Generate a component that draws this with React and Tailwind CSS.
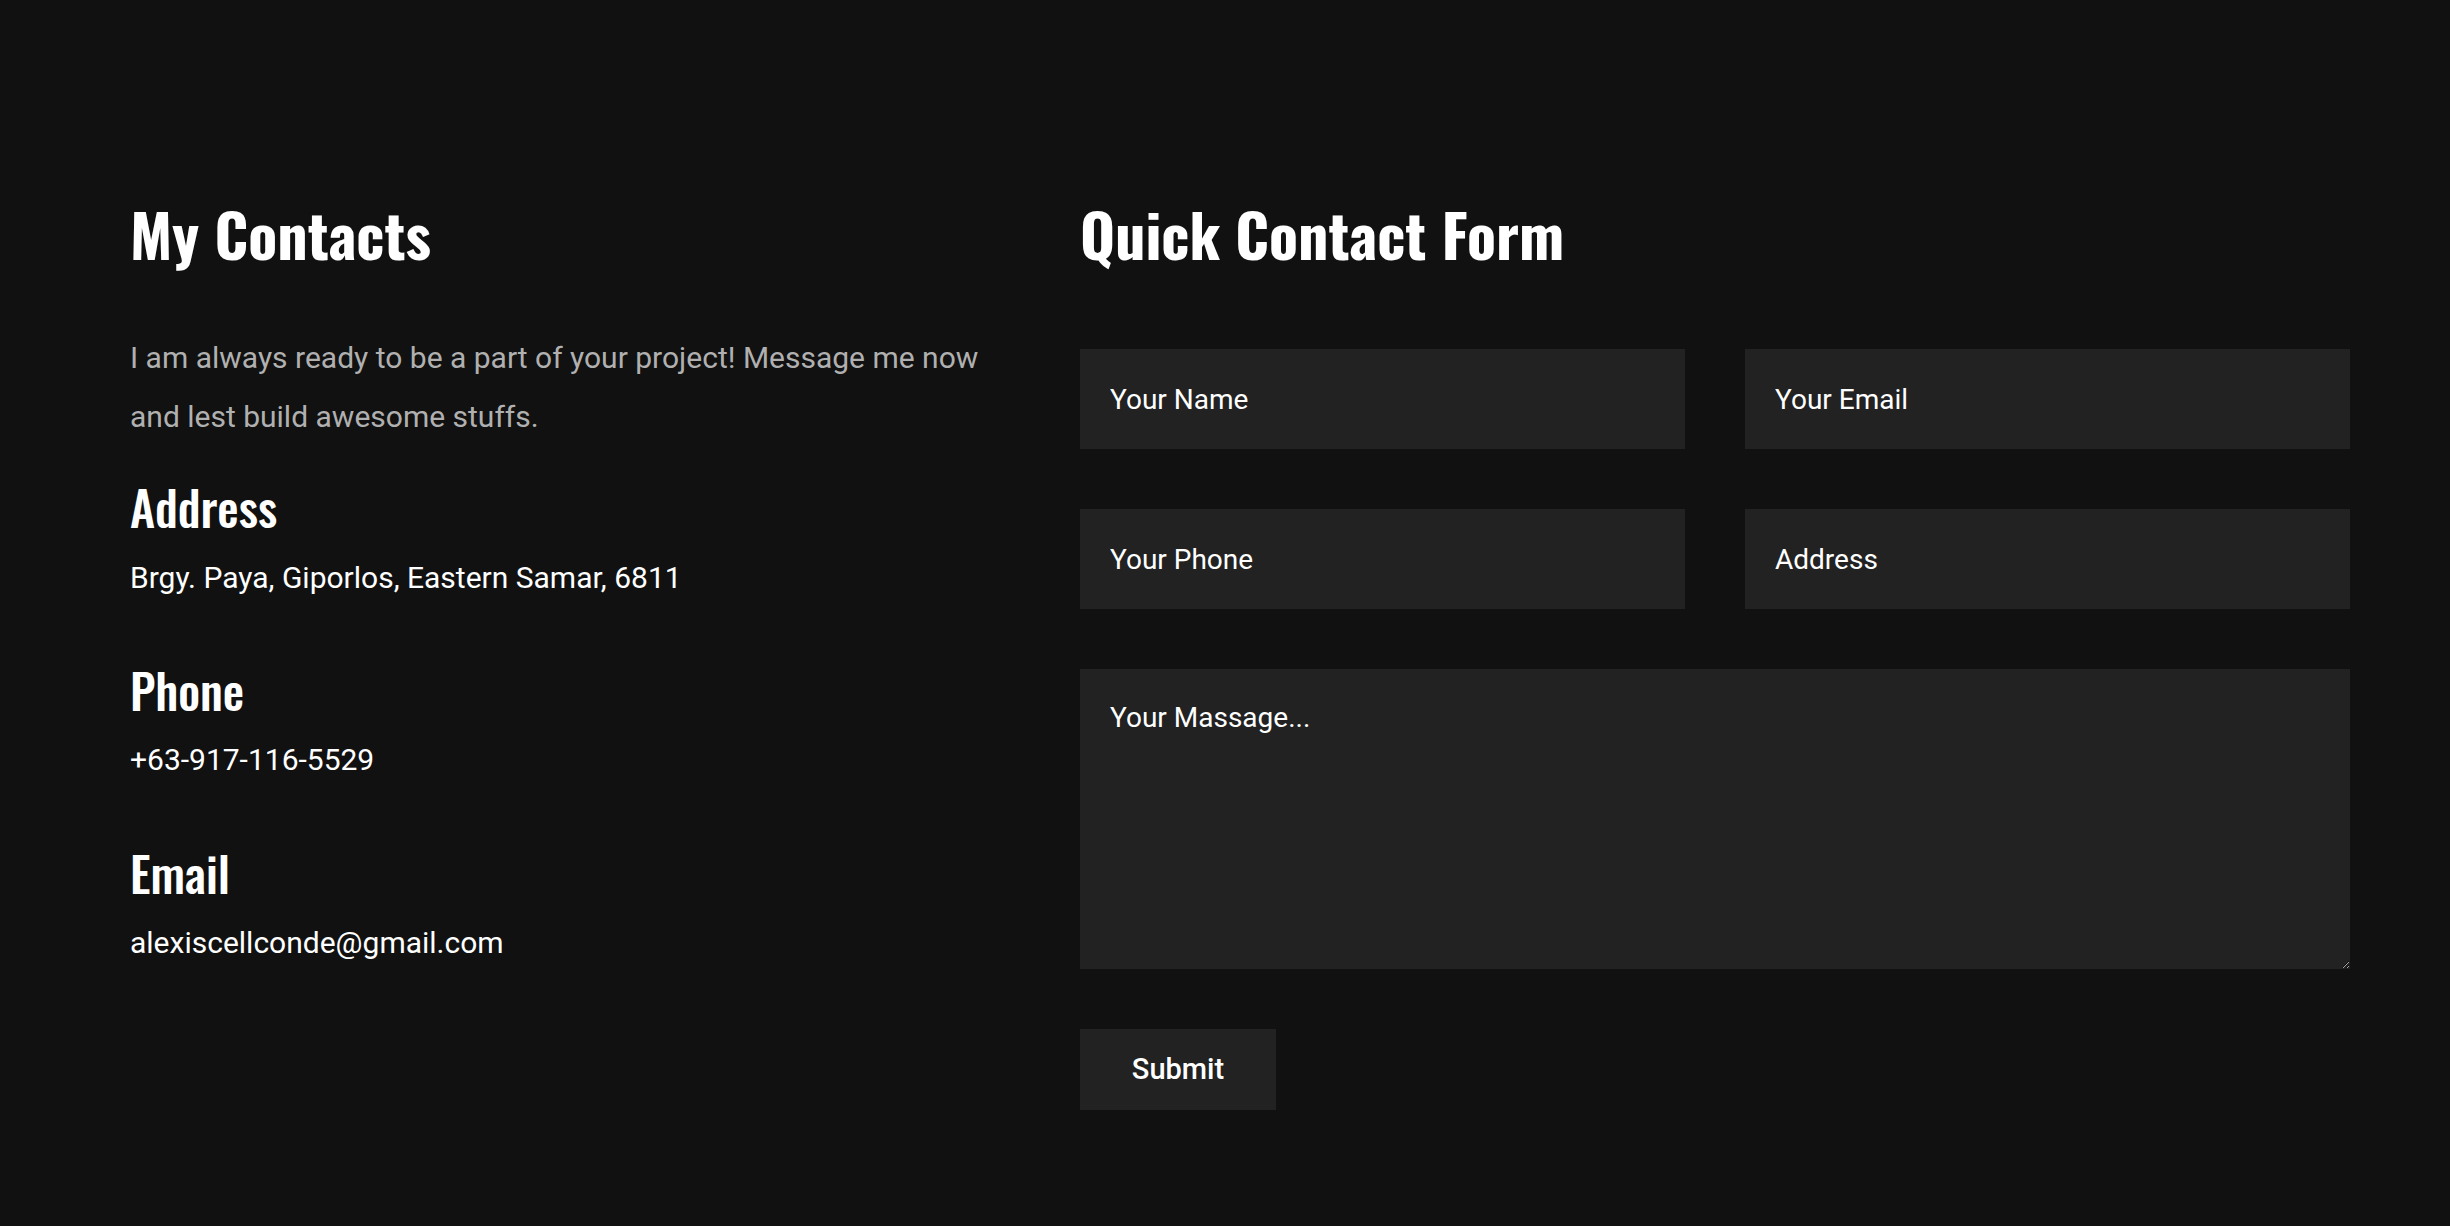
export default function App() {
  const heading = { fontFamily: 'Oswald, "Liberation Sans Narrow", "DejaVu Sans Condensed", sans-serif' }
  const body = { fontFamily: 'Roboto, "Noto Sans", sans-serif' }

  const field =
    'h-[100px] w-full bg-[#222222] px-[30px] text-[28px] text-white outline-none placeholder:text-white'

  return (
    <div className="min-h-screen bg-[#111111] text-white" style={body}>
      <section className="flex gap-[80px] pl-[130px] pr-[100px] pt-[203px] pb-[116px]">
        {/* Contacts */}
        <div className="w-[870px] shrink-0">
          <h2 className="text-[60px] font-bold leading-none" style={heading}>
            My Contacts
          </h2>
          <p className="mt-[65px] text-[30px] leading-[59px] text-[#b0b0b0]">
            I am always ready to be a part of your project! Message me now and lest build awesome stuffs.
          </p>

          <div className="mt-[37px]">
            <h3 className="text-[48px] font-medium leading-none" style={heading}>
              Address
            </h3>
            <p className="mt-[26px] text-[30px] leading-[42px]">Brgy. Paya, Giporlos, Eastern Samar, 6811</p>
          </div>

          <div className="mt-[67px]">
            <h3 className="text-[48px] font-medium leading-none" style={heading}>
              Phone
            </h3>
            <p className="mt-[25px] text-[30px] leading-[42px]">+63-917-116-5529</p>
          </div>

          <div className="mt-[68px]">
            <h3 className="text-[48px] font-medium leading-none" style={heading}>
              Email
            </h3>
            <p className="mt-[25px] text-[30px] leading-[42px]">alexiscellconde@gmail.com</p>
          </div>
        </div>

        {/* Form */}
        <div className="w-[1270px] shrink-0">
          <h2 className="text-[60px] font-bold leading-none" style={heading}>
            Quick Contact Form
          </h2>
          <form className="mt-[86px]" onSubmit={(e) => e.preventDefault()}>
            <div className="grid grid-cols-2 gap-x-[60px] gap-y-[60px]">
              <input className={field} placeholder="Your Name" style={body} />
              <input className={field} placeholder="Your Email" style={body} />
              <input className={field} placeholder="Your Phone" style={body} />
              <input className={field} placeholder="Address" style={body} />
            </div>
            <textarea
              className="mt-[60px] block h-[300px] w-full bg-[#222222] px-[30px] pt-[28px] text-[28px] leading-[42px] text-white outline-none placeholder:text-white"
              placeholder="Your Massage..."
              style={body}
            />
            <button
              type="submit"
              className="mt-[60px] h-[81px] w-[196px] bg-[#222222] text-[29px] font-medium text-white"
              style={body}
            >
              Submit
            </button>
          </form>
        </div>
      </section>
    </div>
  )
}
